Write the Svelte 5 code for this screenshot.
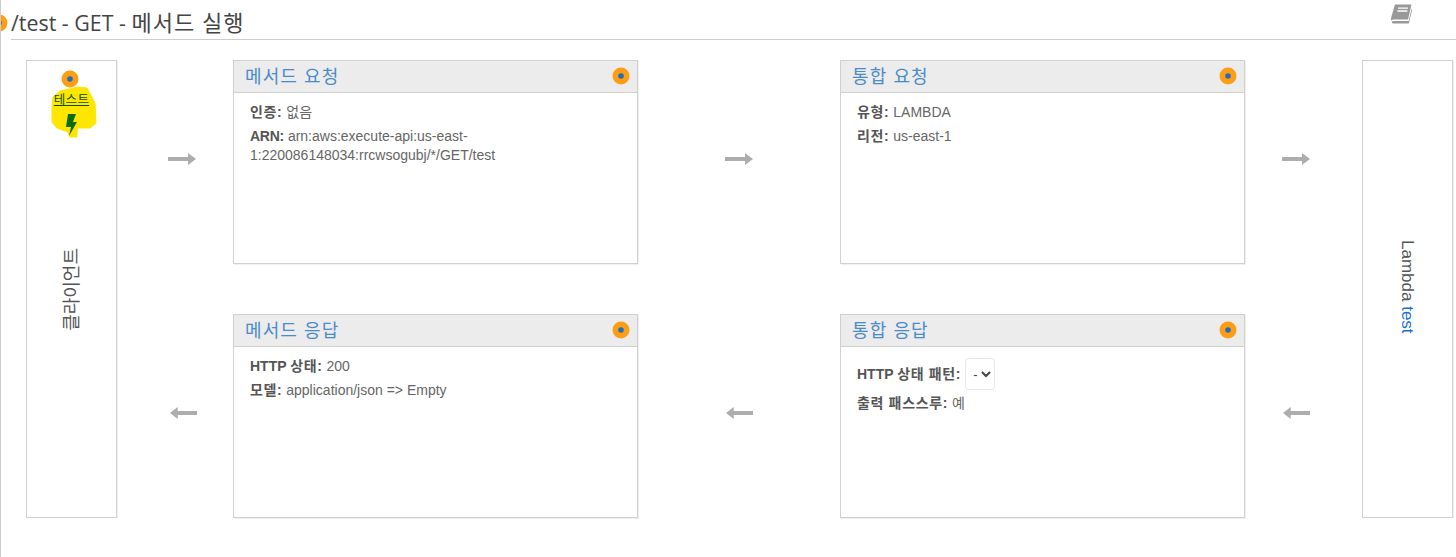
<script>
  const hasKo = (s) => /[가-힣]/.test(s);
  const top = [
    { title: '메서드 요청', lines: [['인증:', '없음'], ['ARN:', 'arn:aws:execute-api:us-east-1:220086148034:rrcwsogubj/*/GET/test']] },
    { title: '통합 요청', lines: [['유형:', 'LAMBDA'], ['리전:', 'us-east-1']] }
  ];
</script>

{#snippet dot()}
  <svg class="dot" width="18" height="18" viewBox="0 0 18 18" aria-hidden="true">
    <circle cx="9" cy="9" r="8.5" fill="#ff9d14" />
    <circle cx="9" cy="9" r="2.8" fill="#1f6dbd" />
  </svg>
{/snippet}

{#snippet arrow(left, cls)}
  <svg class="arrow {cls}" class:left width={left ? 27 : 28} height="14" viewBox="0 0 28 14" preserveAspectRatio="none" aria-hidden="true">
    <path d="M0 5H20V1L28 7L20 13V9H0Z" fill="#adadad" />
  </svg>
{/snippet}

{#snippet head(title)}
  <header class="card-head">
    <h3>{title}</h3>
    {@render dot()}
  </header>
{/snippet}

<div class="page">
  <div class="title-bar">
    <span class="title-dot">{@render dot()}</span>
    <h2>/test - GET - <span class="ko">메서드 실행</span></h2>
    <svg class="book" width="22" height="21" viewBox="0 0 22 21" aria-hidden="true">
      <path d="M5 .5H21.5L18 15.5H3.5C2.2 15.5 1.4 16.3 1.2 17 .9 15 1.2 13.5 1.6 12Z" fill="#999" />
      <path d="M3.6 17H18.6L21.6 4.5 22 6 18.8 19.5H4C2.6 19.5 1.6 18.8 1.9 17.9 2.1 17.4 2.8 17 3.6 17Z" fill="#999" />
      <path d="M8 4.2H18M7.4 7H17.4" stroke="#fff" stroke-width="1.3" />
    </svg>
  </div>

  <div class="diagram">
    <aside class="side client">
      <div class="test">
        <svg class="blob" width="46" height="55" viewBox="0 0 46 55" aria-hidden="true">
          <path d="M1 24L2 14 9 8 27 4 36 5 44 20 45 40 39 45H26V54H19L17 49 6 45 1 39Z" fill="#ffe600" stroke="#ffe600" stroke-width="1" stroke-linejoin="round" />
          <path d="M17 31H25L22 39H26L18 53 20 44H15Z" fill="#0c6b0c" />
        </svg>
        <span class="test-dot">{@render dot()}</span>
        <a class="test-label" href="#test">테스트</a>
      </div>
      <span class="vertical">클라이언트</span>
    </aside>

    {@render arrow(false, 'first')}

    <section class="card">
      {@render head(top[0].title)}
      <div class="body">
        {#each top[0].lines as [k, v]}
          <p><b class:wide={hasKo(k)} class:tight={!hasKo(k)}>{k}</b> {v}</p>
        {/each}
      </div>
    </section>

    {@render arrow(false, '')}

    <section class="card">
      {@render head(top[1].title)}
      <div class="body">
        {#each top[1].lines as [k, v]}
          <p><b class="wide">{k}</b> {v}</p>
        {/each}
      </div>
    </section>

    {@render arrow(false, 'last')}

    <aside class="side lambda">
      <span class="vertical small">Lambda <a href="#test">test</a></span>
    </aside>

    {@render arrow(true, 'first')}

    <section class="card">
      {@render head('메서드 응답')}
      <div class="body">
        <p><b>HTTP <span class="wide">상태:</span></b> 200</p>
        <p><b class="wide">모델:</b> application/json =&gt; Empty</p>
      </div>
    </section>

    {@render arrow(true, '')}

    <section class="card">
      {@render head('통합 응답')}
      <div class="body integ">
        <p class="status">
          <b>HTTP <span class="wide">상태 패턴:</span></b>
          <select><option>-</option></select>
        </p>
        <p><b class="wide">출력 패스스루:</b> 예</p>
      </div>
    </section>

    {@render arrow(true, 'last')}
  </div>
</div>

<style>
  :global(body) {
    margin: 0;
    background: #fff;
    font-family: "Liberation Sans", "Noto Sans CJK KR", sans-serif;
    color: #444;
  }
  .page {
    box-sizing: border-box;
    width: 1456px;
    height: 557px;
    border-left: 1px solid #ccc;
    overflow: hidden;
  }
  .title-bar {
    position: relative;
    box-sizing: border-box;
    height: 40px;
    margin-left: 10px;
    border-bottom: 1px solid #ccc;
  }
  .title-bar h2 {
    margin: 0;
    font: 400 21.4px/45px "Open Sans", "Noto Sans CJK KR", sans-serif;
    color: #444;
  }
  .ko {
    font-size: 22px;
    letter-spacing: 1px;
  }
  .title-dot {
    position: absolute;
    left: -21px;
    top: 14px;
  }
  .book {
    position: absolute;
    left: 1379px;
    top: 4px;
  }
  .diagram {
    display: grid;
    grid-template-columns: 91px 116px 405px 202px 405px 117px 91px;
    grid-template-rows: 204px 204px;
    row-gap: 50px;
    margin: 20px 0 0 25px;
    justify-items: center;
  }
  .side {
    grid-row: 1 / 3;
    box-sizing: border-box;
    width: 91px;
    border: 1px solid #d0d0d0;
    box-shadow: 1px 0 0 #f0f0f0;
    position: relative;
    display: flex;
    align-items: center;
    justify-content: center;
  }
  .client { grid-column: 1; grid-row: 1 / 3; }
  .lambda { grid-column: 7; grid-row: 1 / 3; }
  .vertical {
    writing-mode: vertical-rl;
    text-orientation: sideways;
    font-size: 18px;
    color: #555;
    white-space: nowrap;
  }
  .client .vertical {
    transform: rotate(180deg);
    margin-top: 0;
    margin-right: 4px;
  }
  .vertical.small { font-size: 17px; margin: 0 2px 5px 0; }
  .vertical a { color: #1a73c9; text-decoration: none; }
  .arrow { margin-top: 92px; align-self: start; justify-self: center; }
  .arrow.left { transform: scaleX(-1); }
  .arrow.first { margin-left: 14px; }
  .arrow.left.first { margin-left: 17px; }
  .arrow.last { margin-right: 16px; }
  .arrow.left.last { margin-right: 15px; }
  .card {
    box-sizing: border-box;
    width: 405px;
    border: 1px solid #d0d0d0;
    box-shadow: 1px 1px 0 #f0f0f0;
    background: #fff;
  }
  .card-head {
    box-sizing: border-box;
    height: 32px;
    margin-bottom: -1px;
    padding: 0 7px 2px 11px;
    display: flex;
    align-items: center;
    justify-content: space-between;
    background: #ececec;
    border-bottom: 1px solid #d0d0d0;
  }
  .card-head h3 {
    margin: 3px 0 0;
    font-size: 18px;
    line-height: 24px;
    font-weight: 400;
    color: #4a8bc9;
    letter-spacing: 1.1px;
  }
  .dot { display: block; }
  .body {
    padding: 11px 15px 10px 16px;
    font-size: 14px;
    line-height: 19px;
    color: #666;
  }
  .body p { margin: 0 0 5px; }
  .body b { color: #555; }
  .wide { letter-spacing: .65px; }
  .tight { letter-spacing: -.25px; }
  .integ { padding-top: 12px; padding-left: 16px; }
  .integ .status {
    display: flex;
    align-items: center;
    gap: 4px;
    margin-bottom: 4px;
  }
  select {
    box-sizing: border-box;
    width: 30px;
    height: 32px;
    padding: 0 0 0 3px;
    border: 1px solid #e8e8e8;
    border-radius: 4px;
    background: #fff;
    font: 13px "Liberation Sans", sans-serif;
    color: #444;
  }
  .test {
    position: absolute;
    left: 24px;
    top: 9px;
    width: 46px;
    height: 68px;
  }
  .blob { position: absolute; left: 0; top: 13px; }
  .test-dot { position: absolute; left: 10px; top: 0; }
  .test-label {
    position: absolute;
    left: 0;
    width: 41px;
    top: 23px;
    text-align: center;
    font-size: 12.5px;
    letter-spacing: .3px;
    line-height: 14px;
    color: #0a500a;
    text-decoration: underline;
  }
</style>
